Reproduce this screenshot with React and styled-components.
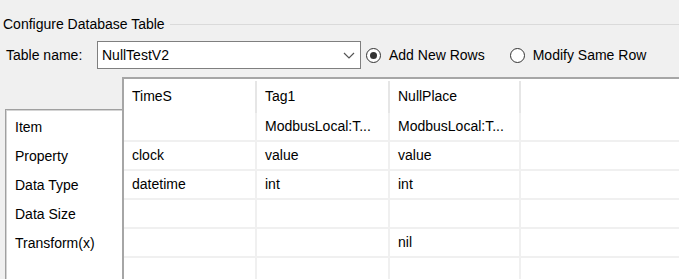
import React from "react";
import styled, { createGlobalStyle } from "styled-components";

const GlobalStyle = createGlobalStyle`
  html, body {
    margin: 0;
    padding: 0;
    background: #f0f0f0;
    overflow: hidden;
  }
  body {
    font-family: "Liberation Sans", Arial, sans-serif;
    font-size: 14px;
    color: #000;
  }
  * { box-sizing: border-box; }
`;

const Page = styled.div`
  width: 679px;
  height: 279px;
  overflow: hidden;
  background: #f0f0f0;
`;

const GroupHeader = styled.div`
  display: flex;
  align-items: center;
  height: 16px;
  margin-top: 16px;
  padding-left: 3px;
`;

const GroupTitle = styled.span`
  white-space: nowrap;
  line-height: 16px;
`;

const GroupRule = styled.div`
  flex: 1;
  height: 1px;
  margin-left: 5px;
  background: #dadada;
`;

const Toolbar = styled.div`
  display: flex;
  align-items: center;
  height: 28px;
  margin-top: 9px;
  padding-left: 6px;
`;

const FieldLabel = styled.span`
  width: 91px;
  white-space: nowrap;
`;

const ComboBox = styled.div`
  display: flex;
  align-items: center;
  width: 264px;
  height: 28px;
  border: 1px solid #7f7f7f;
  background: #fff;
  padding: 0 5px 0 4px;
`;

const ComboText = styled.span`
  flex: 1;
`;

const Radio = styled.label`
  display: flex;
  align-items: center;
  gap: 8px;
  margin-left: ${(p) => p.$offset}px;
  white-space: nowrap;
`;

const RadioCircle = styled.span`
  position: relative;
  width: 15px;
  height: 15px;
  border-radius: 50%;
  border: 1px solid #333;
  background: #fff;
  display: flex;
  align-items: center;
  justify-content: center;
  &::after {
    content: "";
    display: ${(p) => (p.$checked ? "block" : "none")};
    width: 7px;
    height: 7px;
    border-radius: 50%;
    background: #333;
  }
`;

const Content = styled.div`
  display: flex;
  align-items: flex-start;
  margin-top: 8px;
`;

const SidePanel = styled.div`
  width: 117px;
  height: 200px;
  margin-top: 32px;
  margin-left: 5px;
  background: #fff;
  border-top: 1px solid #a0a0a0;
  border-left: 1px solid #a0a0a0;
  box-shadow: inset 1px 1px 0 #d4d4d4;
  padding-top: 3px;
  padding-left: 9px;
`;

const SideRow = styled.div`
  height: 29px;
  line-height: 29px;
  white-space: nowrap;
`;

const Grid = styled.div`
  flex: 1;
  height: 210px;
  background: #fff;
  border-top: 2px solid #a6a6a6;
  border-left: 2px solid #a6a6a6;
`;

const HeaderRow = styled.div`
  display: flex;
  height: 34px;
  padding-top: 2px;
`;

const HeaderCell = styled.div`
  width: ${(p) => p.$w}px;
  border-right: 2px solid #e6e6e6;
  padding-left: 8px;
  line-height: 30px;
  white-space: nowrap;
`;

const Row = styled.div`
  display: flex;
  height: 29px;
  border-bottom: 2px solid #f0f0f0;
`;

const Cell = styled.div`
  width: ${(p) => p.$w}px;
  border-right: 2px solid #f0f0f0;
  padding-left: 8px;
  line-height: 27px;
  white-space: nowrap;
  overflow: hidden;
`;

const Filler = styled.div`
  flex: 1;
`;

const columns = [
  { name: "TimeS", w: 133 },
  { name: "Tag1", w: 133 },
  { name: "NullPlace", w: 131 },
];

const rows = [
  { label: "Item", values: ["", "ModbusLocal:T...", "ModbusLocal:T..."] },
  { label: "Property", values: ["clock", "value", "value"] },
  { label: "Data Type", values: ["datetime", "int", "int"] },
  { label: "Data Size", values: ["", "", ""] },
  { label: "Transform(x)", values: ["", "", "nil"] },
  { label: "", values: ["", "", ""] },
];

const Chevron = () => (
  <svg width="12" height="7" viewBox="0 0 12 7">
    <polyline
      points="1,1 6,6 11,1"
      fill="none"
      stroke="#555"
      strokeWidth="1.2"
    />
  </svg>
);

export default function App() {
  return (
    <Page>
      <GlobalStyle />
      <GroupHeader>
        <GroupTitle>Configure Database Table</GroupTitle>
        <GroupRule />
      </GroupHeader>
      <Toolbar>
        <FieldLabel>Table name:</FieldLabel>
        <ComboBox>
          <ComboText>NullTestV2</ComboText>
          <Chevron />
        </ComboBox>
        <Radio $offset={5}>
          <RadioCircle $checked />
          Add New Rows
        </Radio>
        <Radio $offset={25}>
          <RadioCircle />
          Modify Same Row
        </Radio>
      </Toolbar>
      <Content>
        <SidePanel>
          {rows
            .filter((r) => r.label)
            .map((r) => (
              <SideRow key={r.label}>{r.label}</SideRow>
            ))}
        </SidePanel>
        <Grid>
          <HeaderRow>
            {columns.map((c) => (
              <HeaderCell key={c.name} $w={c.w}>
                {c.name}
              </HeaderCell>
            ))}
            <Filler />
          </HeaderRow>
          {rows.map((r, i) => (
            <Row key={i}>
              {r.values.map((v, j) => (
                <Cell key={j} $w={columns[j].w}>
                  {v}
                </Cell>
              ))}
              <Filler />
            </Row>
          ))}
        </Grid>
      </Content>
    </Page>
  );
}
